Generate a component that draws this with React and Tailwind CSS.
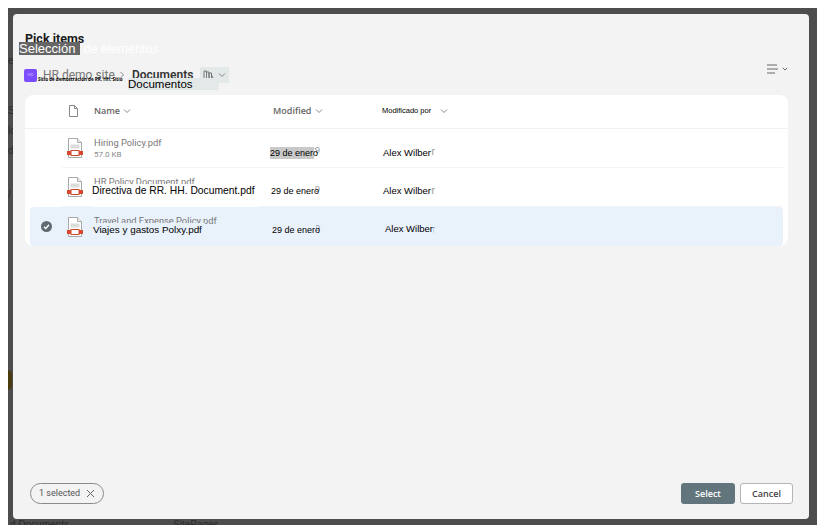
import React from 'react';

function PdfIcon() {
  return (
    <svg width="16" height="20" viewBox="0 0 16 20" fill="none">
      <path d="M1.500.5h9l4 4v15h-13z" fill="#fff" stroke="#a8a8a8" />
      <path d="M10.500.5v4h4" stroke="#a8a8a8" fill="#f1f1f1" />
      <rect x="3.500" y="6.500" width="9" height="4" fill="#dcdcdc" />
      <rect x="4" y="12.500" width="8" height="5" fill="#fff" stroke="#d0492f" />
      <rect x="0" y="13" width="4" height="4" fill="#d6492c" />
      <rect x="12" y="13" width="4" height="4" fill="#d6492c" />
    </svg>
  );
}

function Chevron({ className }) {
  return (
    <svg className={className} width="8" height="8" viewBox="0 0 8 8" fill="none">
      <path d="M1 2.500 4 5.500l3-3" stroke="#888" strokeWidth="1" />
    </svg>
  );
}

const rows = [
  { name: 'Hiring Policy.pdf', size: '57.0 KB', dateClass: 'top-[18px] left-[240px] bg-[#c9c9c9]', personClass: 'top-[17px] left-[351px] w-[50px] pl-[2px]' },
  { name: 'HR Policy Document.pdf', size: '41.2 KB', es: 'Directiva de RR. HH. Document.pdf', esClass: 'left-[62px] text-[10.300px]', dateClass: 'top-[17px] left-[241px] bg-white', personClass: 'top-[16px] left-[351px] w-[50px] pl-[2px]' },
  { name: 'Travel and Expense Policy.pdf', size: '63.8 KB', es: 'Viajes y gastos Polxy.pdf', esClass: 'left-[63px] text-[9.900px]', dateClass: 'top-[17px] left-[242px] bg-[#e9f1fb]', personClass: 'top-[15px] left-[351px] w-[52px] pl-[4px]', selected: true },
];

function Row({ row }) {
  const cover = row.selected ? 'bg-[#e9f1fb]' : 'bg-white';
  return (
    <div className={`relative mx-[5px] flex h-[39px] overflow-hidden ${row.selected ? 'rounded bg-[#e9f1fb]' : ''}`}>
      <div className="flex w-[32px] items-center justify-center">
        {row.selected && (
          <svg width="11" height="11" viewBox="0 0 11 11">
            <circle cx="5.500" cy="5.500" r="5.500" fill="#5f6b72" />
            <path d="M3 5.700 4.800 7.500 8 3.800" stroke="#fff" strokeWidth="1.300" fill="none" />
          </svg>
        )}
      </div>
      <div className={`flex flex-1 items-center ${row.selected ? '' : 'border-b border-[#f4f4f4]'}`}>
        <div className="flex w-[26px] justify-center">
          <PdfIcon />
        </div>
        <div className="ml-[6px] w-[179px] self-start overflow-hidden pt-[7px]">
          <div className="whitespace-nowrap font-['Roboto',sans-serif] text-[9.300px] leading-[13px] text-[#777]">{row.name}</div>
          <div className="font-['Roboto',sans-serif] text-[8px] leading-[11px] text-[#8a8a8a]">{row.size}</div>
        </div>
        <div className="w-[109px] self-start pt-[15px]">
          <div className="font-['Liberation_Sans',sans-serif] text-[9.500px] leading-[11px] text-[#999]">January 29</div>
        </div>
        <div className="self-start pt-[17px] font-['Liberation_Sans',sans-serif] text-[10.500px] leading-[11px] text-[#999]">Alex Wilber</div>
      </div>

      {/* translated text painted over the original */}
      {row.es && (
        <span className={`absolute top-[16px] h-[23px] whitespace-nowrap pr-[3px] font-['Liberation_Sans',sans-serif] leading-[13px] text-black ${cover} ${row.esClass}`}>
          {row.es}
        </span>
      )}
      <span className={`absolute h-[12px] w-[44px] whitespace-nowrap font-['Liberation_Sans',sans-serif] text-[9px] leading-[12px] text-black ${row.dateClass}`}>
        29 de enero
      </span>
      <span className={`absolute h-[16px] whitespace-nowrap font-['Liberation_Sans',sans-serif] text-[9.500px] leading-[13px] text-black ${cover} ${row.personClass}`}>
        Alex Wilber
      </span>
    </div>
  );
}

export default function App() {
  return (
    <div className="h-[532px] w-[826px] overflow-hidden bg-white p-2 font-['Liberation_Sans',sans-serif]">
      <div className="relative h-[517px] w-[809px] overflow-hidden bg-[#4d4d4d] pb-[6px] pl-[5px] pr-[8px] pt-[6px]">
        {/* page showing through the overlay */}
        <div className="absolute left-0 top-[48px] text-[10px] leading-[10px] text-[#2b2b2b]">e</div>
        <div className="absolute left-0 top-[98px] text-[10px] leading-[10px] text-[#2b2b2b]">S</div>
        <div className="absolute left-0 top-[118px] text-[10px] leading-[10px] text-[#2b2b2b]">lc</div>
        <div className="absolute left-0 top-[138px] text-[10px] leading-[10px] text-[#2b2b2b]">dr</div>
        <div className="absolute left-0 top-[182px] text-[10px] leading-[10px] text-[#2b2b2b]">/</div>
        <div className="absolute left-[-6px] top-[362px] h-[20px] w-[10px] rounded-full bg-[#4a3a10]" />
        <div className="absolute left-[2px] top-[512px] text-[10px] leading-[10px] text-[#2b2b2b]">d Documents</div>
        <div className="absolute left-[165px] top-[512px] text-[10px] leading-[10px] text-[#2b2b2b]">SitePages</div>

        <div className="relative flex h-[505px] flex-col rounded bg-[#f3f3f3] font-['Open_Sans',sans-serif]">
          <div className="pl-[12px] pt-[16px] font-['Roboto',sans-serif] text-[12.500px] font-bold leading-[18px] text-[#1a1a1a]">Pick items</div>
          <span className="absolute left-[6px] top-[28px] font-['Liberation_Sans',sans-serif] text-[12.500px] leading-[13px] text-white">
            <span className="inline-block w-[61px] bg-[#666] text-[13px]">Selección</span> de elementos
          </span>

          <div className="mt-[19px] flex h-[16px] items-center pl-[11px]">
            <div className="flex h-[13px] w-[13px] items-center justify-center rounded-[2px] bg-[#7c4dff] text-[4px] text-[#d8ccff]">HD</div>
            <span className="ml-[6px] w-[75px] whitespace-nowrap font-['Roboto',sans-serif] text-[12px] text-[#777]">HR demo site</span>
            <Chevron className="-rotate-90" />
            <span className="ml-[6px] w-[68px] whitespace-nowrap font-['Roboto',sans-serif] text-[12px] font-semibold text-[#333]">Documents</span>
            <div className="flex h-[16px] w-[29px] items-center gap-[3px] bg-[#e3e8e8] pl-[3px]">
              <svg width="12" height="11" viewBox="0 0 12 11" fill="none" stroke="#777">
                <path d="M1 10V1h2.500v9M3.500 10V2H6v8M6 10V3h2.500v7M8.500 5l2.500 5" />
              </svg>
              <Chevron />
            </div>
            <div className="-mt-[12px] ml-auto mr-[21px] flex items-center gap-[4px]">
              <svg width="11" height="10" viewBox="0 0 11 10" stroke="#666">
                <path d="M0 1h10M0 5h11M0 9h8" />
              </svg>
              <svg width="6" height="6" viewBox="0 0 6 6" fill="none" stroke="#666">
                <path d="M.8 1.800 3 4l2.200-2.200" />
              </svg>
            </div>
          </div>
          <span className="absolute left-[115px] top-[64px] w-[91px] bg-[#e3e8e8] font-['Liberation_Sans',sans-serif] text-[11.500px] leading-[12px] text-black">
            Documentos
          </span>
          <span className="absolute left-[25px] top-[63px] whitespace-nowrap text-[4.500px] font-bold leading-[4px] text-black">
            Sitio de demostración de RR. HH. Sitio
          </span>

          <div className="ml-[12px] mr-[21px] mt-[12px] h-[151px] rounded-lg bg-white">
            <div className="flex h-[34px] items-center border-b border-[#f0f0f0] pb-[2px] text-[9px] font-semibold text-[#666]">
              <div className="ml-[43px] w-[26px]">
                <svg width="11" height="12" viewBox="0 0 11 12" fill="none" stroke="#888">
                  <path d="M1.500.5h5l3 3v8h-8zM6.500.5v3h3" />
                </svg>
              </div>
              <div className="flex w-[179px] items-center gap-[3px]">
                Name <Chevron />
              </div>
              <div className="flex w-[109px] items-center gap-[4px]">
                Modified <Chevron />
              </div>
              <div className="flex items-center gap-[9px] font-['Liberation_Sans',sans-serif] text-[7.500px] font-normal text-black">
                Modificado por <Chevron />
              </div>
            </div>
            {rows.map((row) => (
              <Row key={row.name} row={row} />
            ))}
          </div>

          <div className="mt-auto flex items-center justify-between pb-[15px] pl-[17px] pr-[16px]">
            <div className="flex h-[21px] w-[74px] items-center gap-[6px] rounded-full border border-[#8a8a8a] pl-[8px] font-['Roboto',sans-serif] text-[9px] text-[#555]">
              1 selected
              <svg width="9" height="9" viewBox="0 0 9 9" stroke="#666">
                <path d="M1 1l7 7M8 1 1 8" />
              </svg>
            </div>
            <div className="flex gap-[5px]">
              <button className="h-[21px] w-[54px] rounded-[3px] bg-[#63757c] text-[9px] font-semibold text-white">Select</button>
              <button className="h-[21px] w-[53px] rounded-[3px] border border-[#b5b5b5] bg-white text-[9px] font-semibold text-[#444]">Cancel</button>
            </div>
          </div>
        </div>
      </div>
    </div>
  );
}
